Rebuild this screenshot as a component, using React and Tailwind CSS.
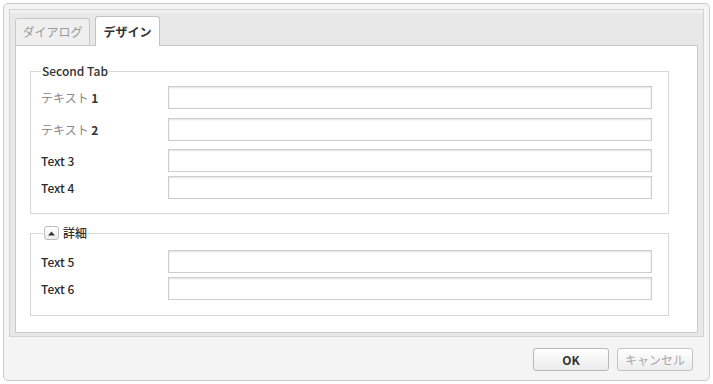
import React from "react";

const font = { fontFamily: '"Noto Sans CJK JP", "Noto Sans", sans-serif' };

function Row({ label, mt }) {
  return (
    <div className={`flex items-center ${mt}`}>
      <div className="w-[127px] text-[12px] leading-[16px] text-[#2b2b2b] font-medium">{label}</div>
      <div className="flex-1 h-[23px] border border-[#cdcdcd] bg-white shadow-[inset_0_1px_2px_rgba(0,0,0,0.12)]" />
    </div>
  );
}

function JpLabel({ n }) {
  return (
    <span>
      <span className="text-[#8a8a8a] font-normal">テキスト </span>
      <span className="text-[#333] font-bold">{n}</span>
    </span>
  );
}

export default function App() {
  return (
    <div className="w-[713px] h-[384px] bg-white p-[3px]" style={font}>
      <div className="h-full flex flex-col rounded-[5px] border border-[#cbcbcb] bg-[#f4f4f4] px-[5px] pt-[5px]">
        <div className="flex flex-col border border-[#d2d2d2] bg-[#e8e8e8] px-[5px] pt-[6px] pb-[3px] shadow-[inset_0_3px_0_#f1f1f1]">
          <div className="flex items-end gap-[5px] h-[29px]">
            <div className="w-[75px] h-[27px] rounded-t-[3px] border border-[#c9c9c9] border-b-0 bg-[#efefef] flex items-center justify-center text-[12px] text-[#9a9a9a]">
              ダイアログ
            </div>
            <div className="relative z-10 -mb-px w-[65px] h-[30px] rounded-t-[3px] border border-[#c4c4c4] border-b-0 bg-white flex items-center justify-center text-[12px] font-bold text-[#333]">
              デザイン
            </div>
          </div>
          <div className="h-[288px] border border-[#c9c9c9] bg-white px-[14px] pt-[17px]">
            <fieldset className="border border-[#d6d6d6] pl-[10px] pr-[16px] pt-[7px] pb-[14px] mr-[14px]">
              <legend className="px-[1px] text-[12px] leading-[16px] font-medium text-[#333]">Second Tab</legend>
              <Row label={<JpLabel n="1" />} mt="" />
              <Row label={<JpLabel n="2" />} mt="mt-[9px]" />
              <Row label="Text 3" mt="mt-[8px]" />
              <Row label="Text 4" mt="mt-[4px]" />
            </fieldset>
            <fieldset className="mt-[12px] border border-[#d6d6d6] pl-[10px] pr-[16px] pt-[10px] pb-[15px] mr-[14px]">
              <legend className="ml-[2px] px-[1px] flex items-center gap-[4px] text-[12px] leading-[14px] font-medium text-[#333]">
                <span className="w-[15px] h-[14px] rounded-[3px] border border-[#bdbdbd] bg-gradient-to-b from-white to-[#ececec] flex items-center justify-center">
                  <svg width="7" height="5" viewBox="0 0 7 5">
                    <path d="M0 4.5 L3.5 0.5 L7 4.5 Z" fill="#333" />
                  </svg>
                </span>
                <span>詳細</span>
              </legend>
              <Row label="Text 5" mt="" />
              <Row label="Text 6" mt="mt-[4px]" />
            </fieldset>
          </div>
        </div>
        <div className="flex justify-end gap-[8px] mt-[11px] pr-[11px]">
          <button className="w-[76px] h-[23px] rounded-[3px] border border-[#b9b9b9] bg-gradient-to-b from-white to-[#ebebeb] text-[12px] font-bold text-[#333]">
            OK
          </button>
          <button className="w-[76px] h-[23px] rounded-[3px] border border-[#c4c4c4] bg-gradient-to-b from-white to-[#ededed] text-[12px] text-[#a8a8a8]">
            キャンセル
          </button>
        </div>
      </div>
    </div>
  );
}
